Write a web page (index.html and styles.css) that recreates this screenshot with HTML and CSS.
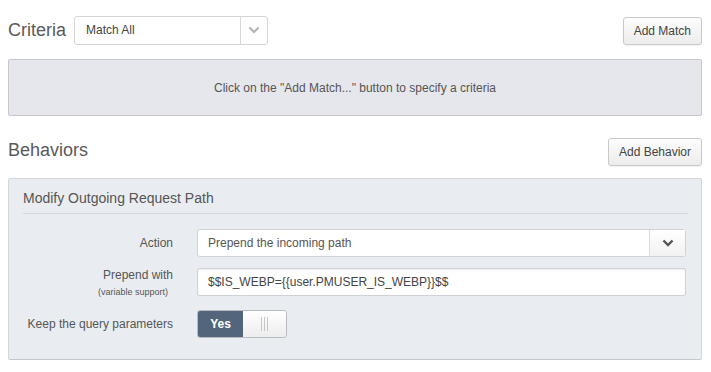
FILE: index.html
```html
<!DOCTYPE html>
<html lang="en">
<head>
    <meta charset="UTF-8">
    <title>Rule Editor</title>
    <link rel="stylesheet" href="styles.css">
</head>
<body>
    <div class="rule-editor">
        <!-- Criteria -->
        <div class="section-head criteria-head">
            <div class="head-left">
                <h2>Criteria</h2>
                <div class="select select-small">
                    <span class="select-value">Match All</span>
                    <span class="select-caret">
                        <svg width="12" height="8" viewBox="0 0 12 8"><path d="M1.5 1.5 L6 6 L10.5 1.5" fill="none" stroke="#b5b5b5" stroke-width="2.2"/></svg>
                    </span>
                </div>
            </div>
            <button class="btn">Add Match</button>
        </div>

        <div class="empty-box">Click on the "Add Match..." button to specify a criteria</div>

        <!-- Behaviors -->
        <div class="section-head behaviors-head">
            <h2>Behaviors</h2>
            <button class="btn">Add Behavior</button>
        </div>

        <div class="behavior-panel">
            <h3 class="panel-title">Modify Outgoing Request Path</h3>

            <div class="form-row row-action">
                <label class="form-label">Action</label>
                <div class="select select-wide">
                    <span class="select-value">Prepend the incoming path</span>
                    <span class="select-caret">
                        <svg width="12" height="8" viewBox="0 0 12 8"><path d="M1.5 1.5 L6 6 L10.5 1.5" fill="none" stroke="#555" stroke-width="2.4"/></svg>
                    </span>
                </div>
            </div>

            <div class="form-row row-prepend">
                <label class="form-label">Prepend with<small>(variable support)</small></label>
                <div class="text-input">$$IS_WEBP={{user.PMUSER_IS_WEBP}}$$</div>
            </div>

            <div class="form-row row-toggle">
                <label class="form-label">Keep the query parameters</label>
                <div class="toggle">
                    <span class="toggle-on">Yes</span>
                    <span class="toggle-handle"><i></i><i></i><i></i></span>
                </div>
            </div>
        </div>
    </div>
</body>
</html>
```

FILE: styles.css
```css
:root {
    --text-color: #555555;
    --heading-color: #5a5a5a;
    --empty-bg: #e6e7ec;
    --panel-bg: #e9edf1;
    --toggle-on: #52657a;
}

body {
    margin: 0;
    padding: 0 9px 0 8px;
    font-family: 'Liberation Sans', Arial, sans-serif;
    font-size: 12px;
    color: var(--text-color);
    background: #ffffff;
}

.section-head {
    display: flex;
    justify-content: space-between;
    align-items: center;
}

.section-head h2 {
    margin: 0;
    font-size: 18px;
    line-height: 21px;
    font-weight: normal;
    color: var(--heading-color);
}

.criteria-head {
    padding-top: 15px;
}

.head-left {
    display: flex;
    align-items: center;
    gap: 8px;
}

.behaviors-head {
    padding-top: 22px;
    align-items: flex-start;
}

.behaviors-head h2 {
    margin-top: 2px;
}

.btn {
    font-family: inherit;
    font-size: 12px;
    color: #444;
    height: 28px;
    padding: 0 10px;
    border: 1px solid #c9c9c9;
    border-radius: 3px;
    background: linear-gradient(#fdfdfd, #ececec);
    box-shadow: 0 1px 1px rgba(0, 0, 0, 0.06);
}

.criteria-head .btn {
    margin-top: 2px;
}

/* Selects */
.select {
    display: flex;
    align-items: stretch;
    background: #ffffff;
    border: 1px solid #d6d6d6;
    border-radius: 3px;
    box-sizing: border-box;
}

.select-value {
    flex: 1;
    display: flex;
    align-items: center;
    padding-left: 10px;
}

.select-caret {
    display: flex;
    align-items: center;
    justify-content: center;
    width: 26px;
    border-left: 1px solid #d6d6d6;
}

.select-small {
    width: 194px;
    height: 29px;
}

.select-small .select-value {
    font-size: 12px;
    color: #444;
    padding-left: 11px;
}

.select-wide {
    flex: 1;
    height: 28px;
    border-color: #cfd3d7;
}

.select-wide .select-caret {
    width: 35px;
    border-left-color: #dcdcdc;
    background: linear-gradient(#ffffff, #f2f2f2);
}

/* Empty criteria box */
.empty-box {
    margin-top: 14px;
    height: 57px;
    box-sizing: border-box;
    display: flex;
    align-items: center;
    justify-content: center;
    background: var(--empty-bg);
    border: 1px solid #c6c7cc;
    border-radius: 2px;
    font-size: 12px;
    color: #555;
}

/* Behavior panel */
.behavior-panel {
    margin-top: 12px;
    height: 182px;
    box-sizing: border-box;
    padding: 11px 15px 0 14px;
    background: var(--panel-bg);
    border: 1px solid #d3d6da;
    border-bottom-color: #c4c7cb;
    border-radius: 2px;
}

.panel-title {
    margin: 0 -2px 0 0;
    padding-bottom: 7px;
    font-size: 14px;
    font-weight: normal;
    color: #555;
    border-bottom: 1px solid #d4d8dc;
}

.form-row {
    display: flex;
    align-items: center;
    gap: 24px;
}

.form-label {
    width: 150px;
    flex-shrink: 0;
    text-align: right;
    font-size: 12px;
    color: #555;
    line-height: 14px;
}

.form-label small {
    display: block;
    font-size: 9px;
    line-height: 10px;
    margin-top: 5px;
    margin-right: 5px;
}

.row-action {
    margin-top: 15px;
}

.row-prepend {
    margin-top: 11px;
    align-items: flex-start;
}

.row-toggle {
    margin-top: 13px;
}

.text-input {
    flex: 1;
    height: 28px;
    box-sizing: border-box;
    display: flex;
    align-items: center;
    padding-left: 10px;
    background: #ffffff;
    border: 1px solid #cfd3d7;
    border-radius: 2px;
    box-shadow: inset 0 1px 2px rgba(0, 0, 0, 0.08);
    color: #444;
}

/* Toggle */
.toggle {
    display: flex;
    width: 90px;
    height: 28px;
    box-sizing: border-box;
    border: 1px solid #b8bcc0;
    border-radius: 3px;
    overflow: hidden;
}

.toggle-on {
    width: 45px;
    display: flex;
    align-items: center;
    justify-content: center;
    background: var(--toggle-on);
    color: #ffffff;
    font-weight: bold;
    font-size: 12px;
}

.toggle-handle {
    flex: 1;
    display: flex;
    align-items: center;
    justify-content: center;
    gap: 2px;
    background: linear-gradient(#ffffff, #ededed);
}

.toggle-handle i {
    width: 1px;
    height: 14px;
    background: #c7c7c7;
}
```
